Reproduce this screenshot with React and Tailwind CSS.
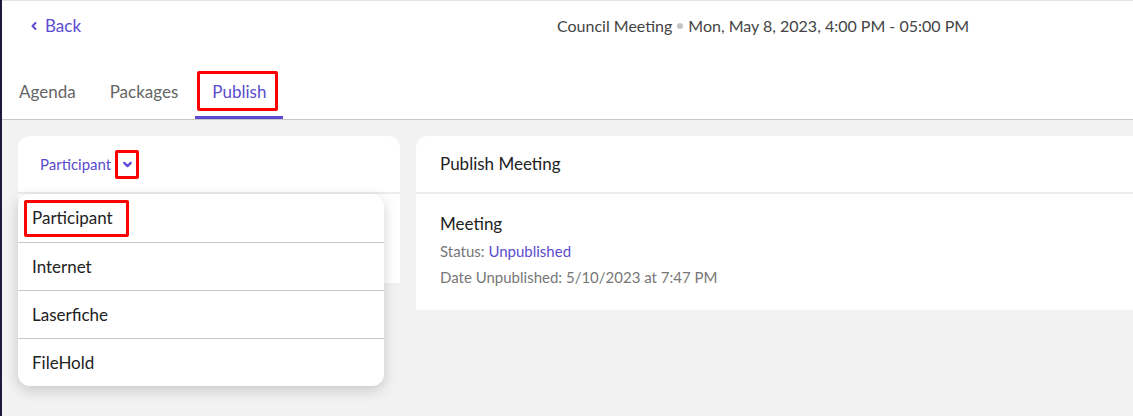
import React from 'react';
import { ChevronLeft, ChevronDown } from 'lucide-react';

const tabs = ['Agenda', 'Packages', 'Publish'];
const options = ['Participant', 'Internet', 'Laserfiche', 'FileHold'];

export default function App() {
  return (
    <div
      className="flex h-[416px] w-[1133px] overflow-hidden border-l-2 border-[#1c1a40] bg-white"
      style={{ fontFamily: 'Lato, "Open Sans", sans-serif' }}
    >
      <div className="flex min-w-0 flex-1 flex-col">
        {/* Header */}
        <div className="border-t border-b border-t-[#e2e2e2] border-b-[#c8c8c8] bg-white">
          <div className="flex h-[50px] items-center">
            <div className="flex w-[555px] items-center pl-[26px] text-[#5a4bd1]">
              <ChevronLeft className="h-[12px] w-[12px]" strokeWidth={4} />
              <span className="ml-[5px] text-[17px]">Back</span>
            </div>
            <div className="flex items-center text-[16px] text-[#444]">
              <span>Council Meeting</span>
              <span className="mx-[5px] h-[6px] w-[6px] rounded-full bg-[#c4c4c4]" />
              <span>Mon, May 8, 2023, 4:00 PM - 05:00 PM</span>
            </div>
          </div>
          <div className="mt-[18px] flex">
            {tabs.map((t) => {
              const active = t === 'Publish';
              return (
                <div
                  key={t}
                  className={`relative flex h-[50px] items-center border-b-[3px] px-[17px] text-[17px] ${
                    active ? 'border-[#5a4bd1] text-[#5a4bd1]' : 'border-transparent text-[#666]'
                  }`}
                >
                  <span className="-mt-[1px]">{t}</span>
                  {active && (
                    <div className="absolute left-[2px] top-[2px] h-[40px] w-[81px] rounded-[2px] border-[3px] border-[#ff0000]" />
                  )}
                </div>
              );
            })}
          </div>
        </div>

        {/* Body */}
        <div className="flex flex-1 gap-[16px] bg-[#f2f2f2] pl-[16px] pt-[16px]">
          <div className="relative h-[147px] w-[382px] rounded-t-xl bg-white">
            <div className="flex h-[58px] items-center border-b-2 border-[#ececec] pl-[22px] text-[15px] text-[#5a4bd1]">
              <span>Participant</span>
              <div className="relative ml-[4px] flex h-[29px] w-[24px] items-center justify-center">
                <ChevronDown className="h-[13px] w-[13px]" strokeWidth={4} />
                <div className="absolute inset-0 rounded-[2px] border-[3px] border-[#ff0000]" />
              </div>
            </div>
            <div className="absolute left-0 top-[58px] z-10 w-[366px] overflow-hidden rounded-xl bg-white shadow-[0_4px_14px_rgba(0,0,0,0.18)]">
              {options.map((o, i) => (
                <div
                  key={o}
                  className={`relative flex h-[48px] items-center pl-[14px] text-[17px] text-[#222] ${
                    i > 0 ? 'border-t border-[#c8c8c8]' : ''
                  }`}
                >
                  {o}
                  {i === 0 && (
                    <div className="absolute left-[6px] top-[6px] h-[37px] w-[105px] rounded-[2px] border-[3px] border-[#ff0000]" />
                  )}
                </div>
              ))}
            </div>
          </div>

          <div className="h-[174px] flex-1 rounded-tl-xl bg-white">
            <div className="flex h-[58px] items-center border-b-2 border-[#ececec] pl-[24px] text-[17px] text-[#222]">
              Publish Meeting
            </div>
            <div className="pl-[24px] pt-[18px]">
              <div className="text-[17px] leading-[24px] text-[#222]">Meeting</div>
              <div className="mt-[5px] text-[15px] leading-[21px] text-[#777]">
                Status: <span className="text-[#5a4bd1]">Unpublished</span>
              </div>
              <div className="mt-[5px] text-[15px] leading-[21px] text-[#777]">
                Date Unpublished: 5/10/2023 at 7:47 PM
              </div>
            </div>
          </div>
        </div>
      </div>
    </div>
  );
}
